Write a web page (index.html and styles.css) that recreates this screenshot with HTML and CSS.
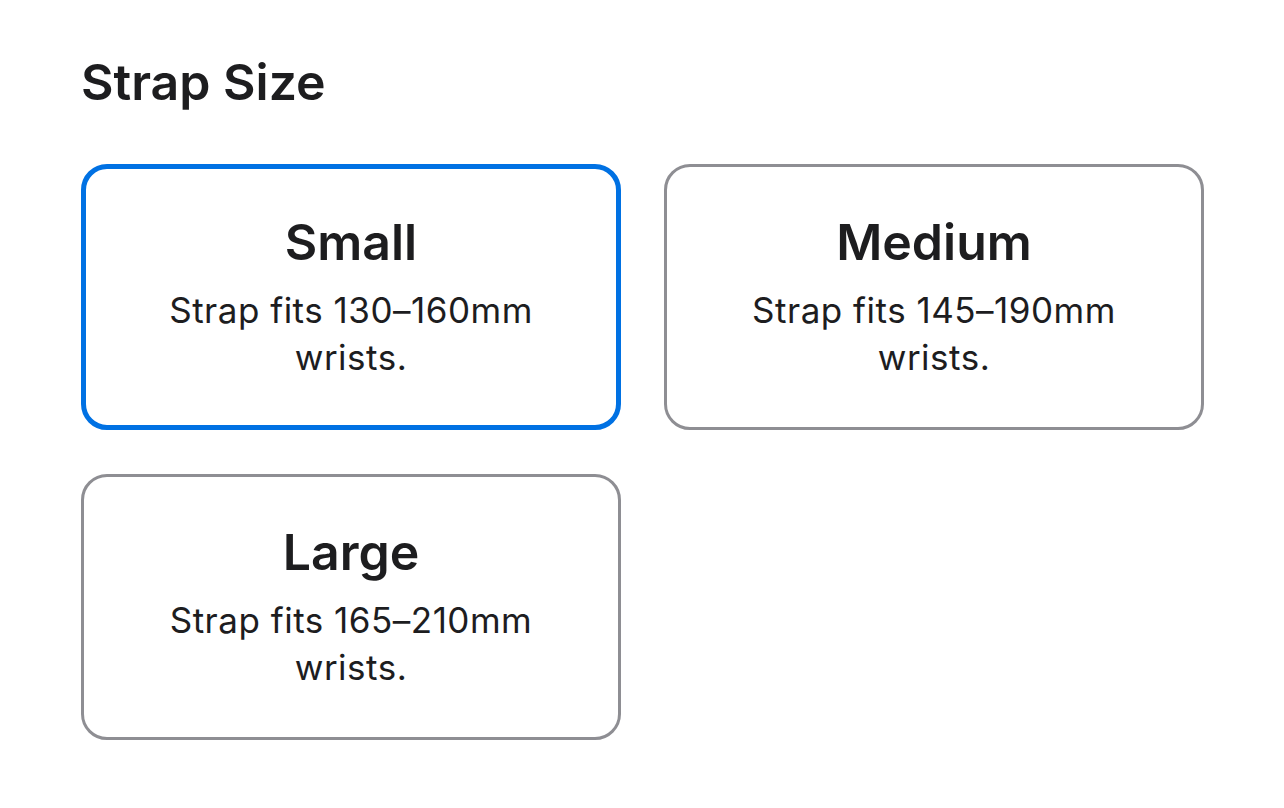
FILE: index.html
```html
<!DOCTYPE html>
<html>
<head>
  <meta charset="utf-8">
  <title>Strap Size</title>
  <link rel="stylesheet" href="styles.css">
</head>
<body>

<div class="page">
  <div class="title">Strap Size</div>

  <div class="size-grid">
    <div class="size-card selected">
      <div class="size-name">Small</div>
      <div class="size-desc">Strap fits 130–160mm<br>wrists.</div>
    </div>
    <div class="size-card">
      <div class="size-name">Medium</div>
      <div class="size-desc">Strap fits 145–190mm<br>wrists.</div>
    </div>
    <div class="size-card">
      <div class="size-name">Large</div>
      <div class="size-desc">Strap fits 165–210mm<br>wrists.</div>
    </div>
  </div>
</div>

</body>
</html>
```

FILE: styles.css
```css
body {
  margin: 0;
  background-color: #ffffff;
  font-family: Inter, "Noto Sans", sans-serif;
  color: #1d1d1f;
}

.page {
  padding: 52px 0 0 81px;
}

/* Section heading */
.title {
  font-size: 50px;
  font-weight: 600;
  line-height: 60px;
  margin-bottom: 52px;
}

/* Card grid */
.size-grid {
  display: grid;
  grid-template-columns: 540px 540px;
  grid-auto-rows: 266px;
  gap: 44px 43px;
}

.size-card {
  box-sizing: border-box;
  border: 3px solid #8e8e93;
  border-radius: 26px;
  display: flex;
  flex-direction: column;
  align-items: center;
  justify-content: center;
  text-align: center;
  padding-bottom: 1px;
}

.size-card.selected {
  border: 5px solid #0071e3;
}

.size-name {
  font-size: 50px;
  font-weight: 600;
  line-height: 60px;
  margin-bottom: 15px;
}

.size-desc {
  font-size: 35px;
  font-weight: 400;
  line-height: 47px;
  letter-spacing: 0.5px;
}
```
